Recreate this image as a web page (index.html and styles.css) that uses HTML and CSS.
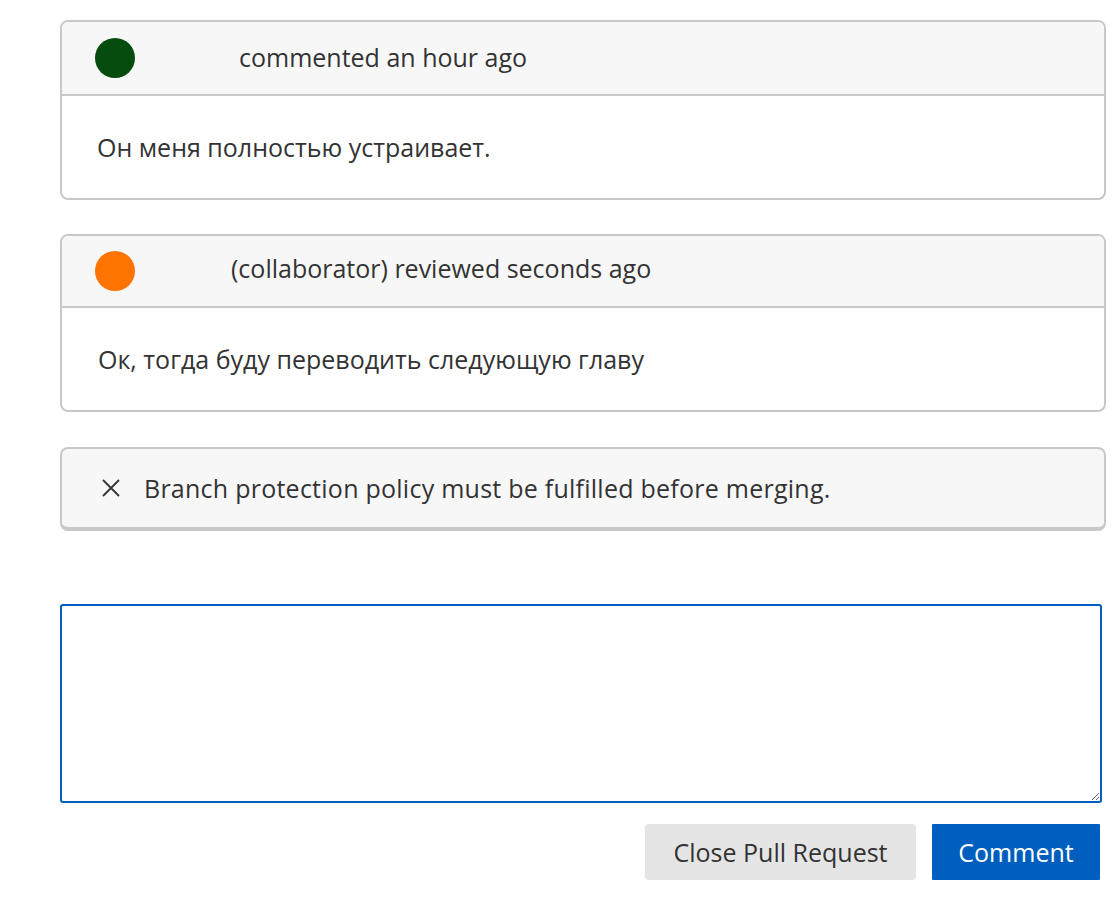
FILE: index.html
```html
<!DOCTYPE html>
<html lang="ru">
<head>
<meta charset="utf-8">
<title>Pull Request</title>
<link rel="stylesheet" href="styles.css">
</head>
<body>
<div class="timeline">
  <div class="card">
    <div class="card-header">
      <span class="avatar avatar-green"></span>
      <span class="author author-1"></span>
      <span class="meta">commented an hour ago</span>
    </div>
    <div class="card-body">Он меня полностью устраивает.</div>
  </div>

  <div class="card card-second">
    <div class="card-header">
      <span class="avatar avatar-orange"></span>
      <span class="author author-2"></span>
      <span class="meta">(collaborator) reviewed seconds ago</span>
    </div>
    <div class="card-body">Ок, тогда буду переводить следующую главу</div>
  </div>

  <div class="merge-box">
    <svg class="x-icon" width="20" height="20" viewBox="0 0 20 20" aria-hidden="true">
      <path d="M2 2 L18 18 M18 2 L2 18" stroke="#333" stroke-width="1.8" fill="none"/>
    </svg>
    <span class="merge-text">Branch protection policy must be fulfilled before merging.</span>
  </div>

  <form class="comment-form">
    <textarea class="comment-input"></textarea>
    <div class="actions">
      <button type="button" class="btn btn-secondary">Close Pull Request</button>
      <button type="button" class="btn btn-primary">Comment</button>
    </div>
  </form>
</div>
</body>
</html>
```

FILE: styles.css
```css
html, body {
  margin: 0;
  padding: 0;
  background: #ffffff;
}

body {
  font-family: "Open Sans", "Noto Sans", sans-serif;
  font-size: 25px;
  color: #333333;
}

.timeline {
  width: 1046px;
  padding: 20px 0 0 60px;
  display: flex;
  flex-direction: column;
}

.card {
  border: 2px solid #c8c8c8;
  border-radius: 8px;
  background: #ffffff;
  overflow: hidden;
  margin-bottom: 34px;
}

.card-second {
  margin-bottom: 35px;
}

.card-header {
  height: 72px;
  background: #f7f7f7;
  border-bottom: 2px solid #c8c8c8;
  display: flex;
  align-items: center;
  padding-left: 33px;
}

.card-second .card-header {
  height: 70px;
}

.meta {
  margin-top: -2px;
}

.card-second .meta {
  margin-top: -6px;
}

.avatar {
  width: 40px;
  height: 40px;
  border-radius: 50%;
  flex: none;
}

.avatar-green { background: #054c0e; }
.avatar-orange { background: #ff7300; }

.author-1 { width: 104px; }
.author-2 { width: 96px; }

.card-body {
  height: 102px;
  display: flex;
  align-items: center;
  padding-left: 35px;
}

.card-second .card-body {
  padding-left: 36px;
}

.merge-box {
  height: 78px;
  background: #f7f7f7;
  border: 2px solid #c8c8c8;
  border-bottom-width: 4px;
  border-radius: 8px;
  display: flex;
  align-items: center;
  padding-left: 39px;
}

.x-icon {
  width: 20px;
  height: 20px;
  margin-right: 23px;
  flex: none;
}

.merge-text {
  letter-spacing: 0.25px;
}

.comment-form {
  margin-top: 73px;
  display: flex;
  flex-direction: column;
}

.comment-input {
  box-sizing: border-box;
  width: 1042px;
  height: 199px;
  border: 2px solid #005fbf;
  border-radius: 3px;
  outline: none;
  font: inherit;
  padding: 10px;
  resize: vertical;
  display: block;
  margin: 0;
}

.actions {
  width: 1040px;
  margin-top: 21px;
  display: flex;
  justify-content: flex-end;
  gap: 16px;
}

.btn {
  height: 56px;
  border: none;
  font-family: inherit;
  font-size: 25px;
  padding: 0;
  cursor: pointer;
}

.btn-secondary {
  width: 271px;
  background: #e5e5e5;
  color: #333333;
  border-radius: 4px;
}

.btn-primary {
  width: 168px;
  background: #005fbe;
  color: #ffffff;
  border-radius: 1px;
}
```
